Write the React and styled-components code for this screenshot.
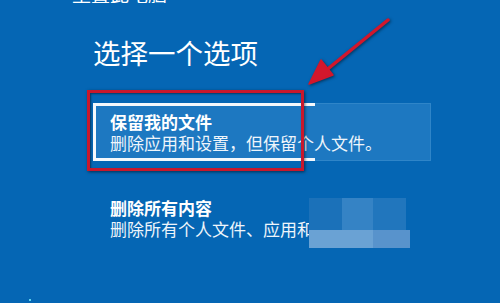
import React from 'react'
import styled, { createGlobalStyle } from 'styled-components'

const GlobalStyle = createGlobalStyle`
  html, body {
    margin: 0;
    padding: 0;
    background: #0566b4;
  }
`

export default () => {
  return (
    <Page>
      <GlobalStyle />
      <Crumb>
        <CrumbText>重置此电脑</CrumbText>
      </Crumb>
      <Main>
        <Heading>选择一个选项</Heading>
        <Options>
          <Option selected>
            <OptionTitle>保留我的文件</OptionTitle>
            <OptionText>删除应用和设置，但保留个人文件。</OptionText>
          </Option>
          <Option>
            <OptionTitle>删除所有内容</OptionTitle>
            <OptionText>删除所有个人文件、应用和设置。</OptionText>
          </Option>
        </Options>
      </Main>

      <Mosaic>
        {[
          { w: 33, h: 32, c: '#1b71b9' },
          { w: 31, h: 32, c: '#3583c5' },
          { w: 33, h: 32, c: '#2176bd' },
          { w: 4, h: 32, c: 'transparent' },
          { w: 64, h: 18, c: '#6aa2d4' },
          { w: 37, h: 18, c: '#5893cc' },
        ].map((b, i) => (
          <MosaicBlock key={i} style={{ width: b.w, height: b.h, background: b.c }} />
        ))}
      </Mosaic>

      <Highlight />
      <Arrow width="500" height="303" viewBox="0 0 500 303">
        <g fill="#d2172c" stroke="#d2172c" strokeLinecap="round" strokeLinejoin="round">
          <line x1="388" y1="20" x2="324" y2="72" strokeWidth="3.5" />
          <polygon points="309,84 333,75 321,60" strokeWidth="1.5" />
        </g>
      </Arrow>
      <Dot />
    </Page>
  )
}

const Page = styled.div`
  position: relative;
  width: 500px;
  height: 303px;
  overflow: hidden;
  padding-left: 72px;
  box-sizing: border-box;
  background: #0566b4;
  color: #fff;
  font-family: "Noto Sans CJK SC", "Noto Sans", sans-serif;
`

const Crumb = styled.div`
  height: 3px;
  overflow: hidden;
`

const CrumbText = styled.div`
  margin-top: -16px;
  font-size: 19px;
  line-height: 19px;
  color: #fff;
`

const Main = styled.div`
  display: flex;
  flex-direction: column;
  margin-left: 21px;
`

const Heading = styled.h1`
  margin: 31px 0 0;
  font-size: 27.5px;
  line-height: 36px;
  font-weight: 400;
`

const Options = styled.div`
  display: flex;
  flex-direction: column;
  gap: 28px;
  margin-top: 33px;
`

const Option = styled.div`
  position: relative;
  width: 338px;
  height: 58px;
  box-sizing: border-box;
  padding: 8px 0 0 17px;
  background: ${p => (p.selected ? '#1d78c1' : 'transparent')};
  outline: ${p => (p.selected ? '1px solid #2f85c8' : 'none')};
  outline-offset: -1px;

  &::before {
    content: '';
    display: ${p => (p.selected ? 'block' : 'none')};
    position: absolute;
    top: 0;
    left: 0;
    width: 222px;
    height: 100%;
    box-sizing: border-box;
    border: 3px solid #f4f8fc;
    border-right: none;
  }
`

const OptionTitle = styled.div`
  font-size: 17px;
  line-height: 21px;
  font-weight: 700;
  white-space: nowrap;
`

const OptionText = styled.div`
  font-size: 17px;
  line-height: 21px;
  white-space: nowrap;
  color: #eef5fb;
`

const Mosaic = styled.div`
  position: absolute;
  left: 309px;
  top: 198px;
  width: 101px;
  display: flex;
  flex-wrap: wrap;
`

const MosaicBlock = styled.div``

const Highlight = styled.div`
  position: absolute;
  left: 87px;
  top: 90px;
  width: 217px;
  height: 81px;
  box-sizing: border-box;
  border: 3px solid #c8182c;
  box-shadow: 1px 1px 3px rgba(0, 0, 0, 0.55), inset 1px 1px 2px rgba(0, 0, 0, 0.45);
`

const Arrow = styled.svg`
  position: absolute;
  left: 0;
  top: 0;
  filter: drop-shadow(1px 1px 1.5px rgba(0, 0, 0, 0.5));
`

const Dot = styled.div`
  position: absolute;
  left: 29px;
  top: 299px;
  width: 2px;
  height: 2px;
  background: #5fd3f0;
`
